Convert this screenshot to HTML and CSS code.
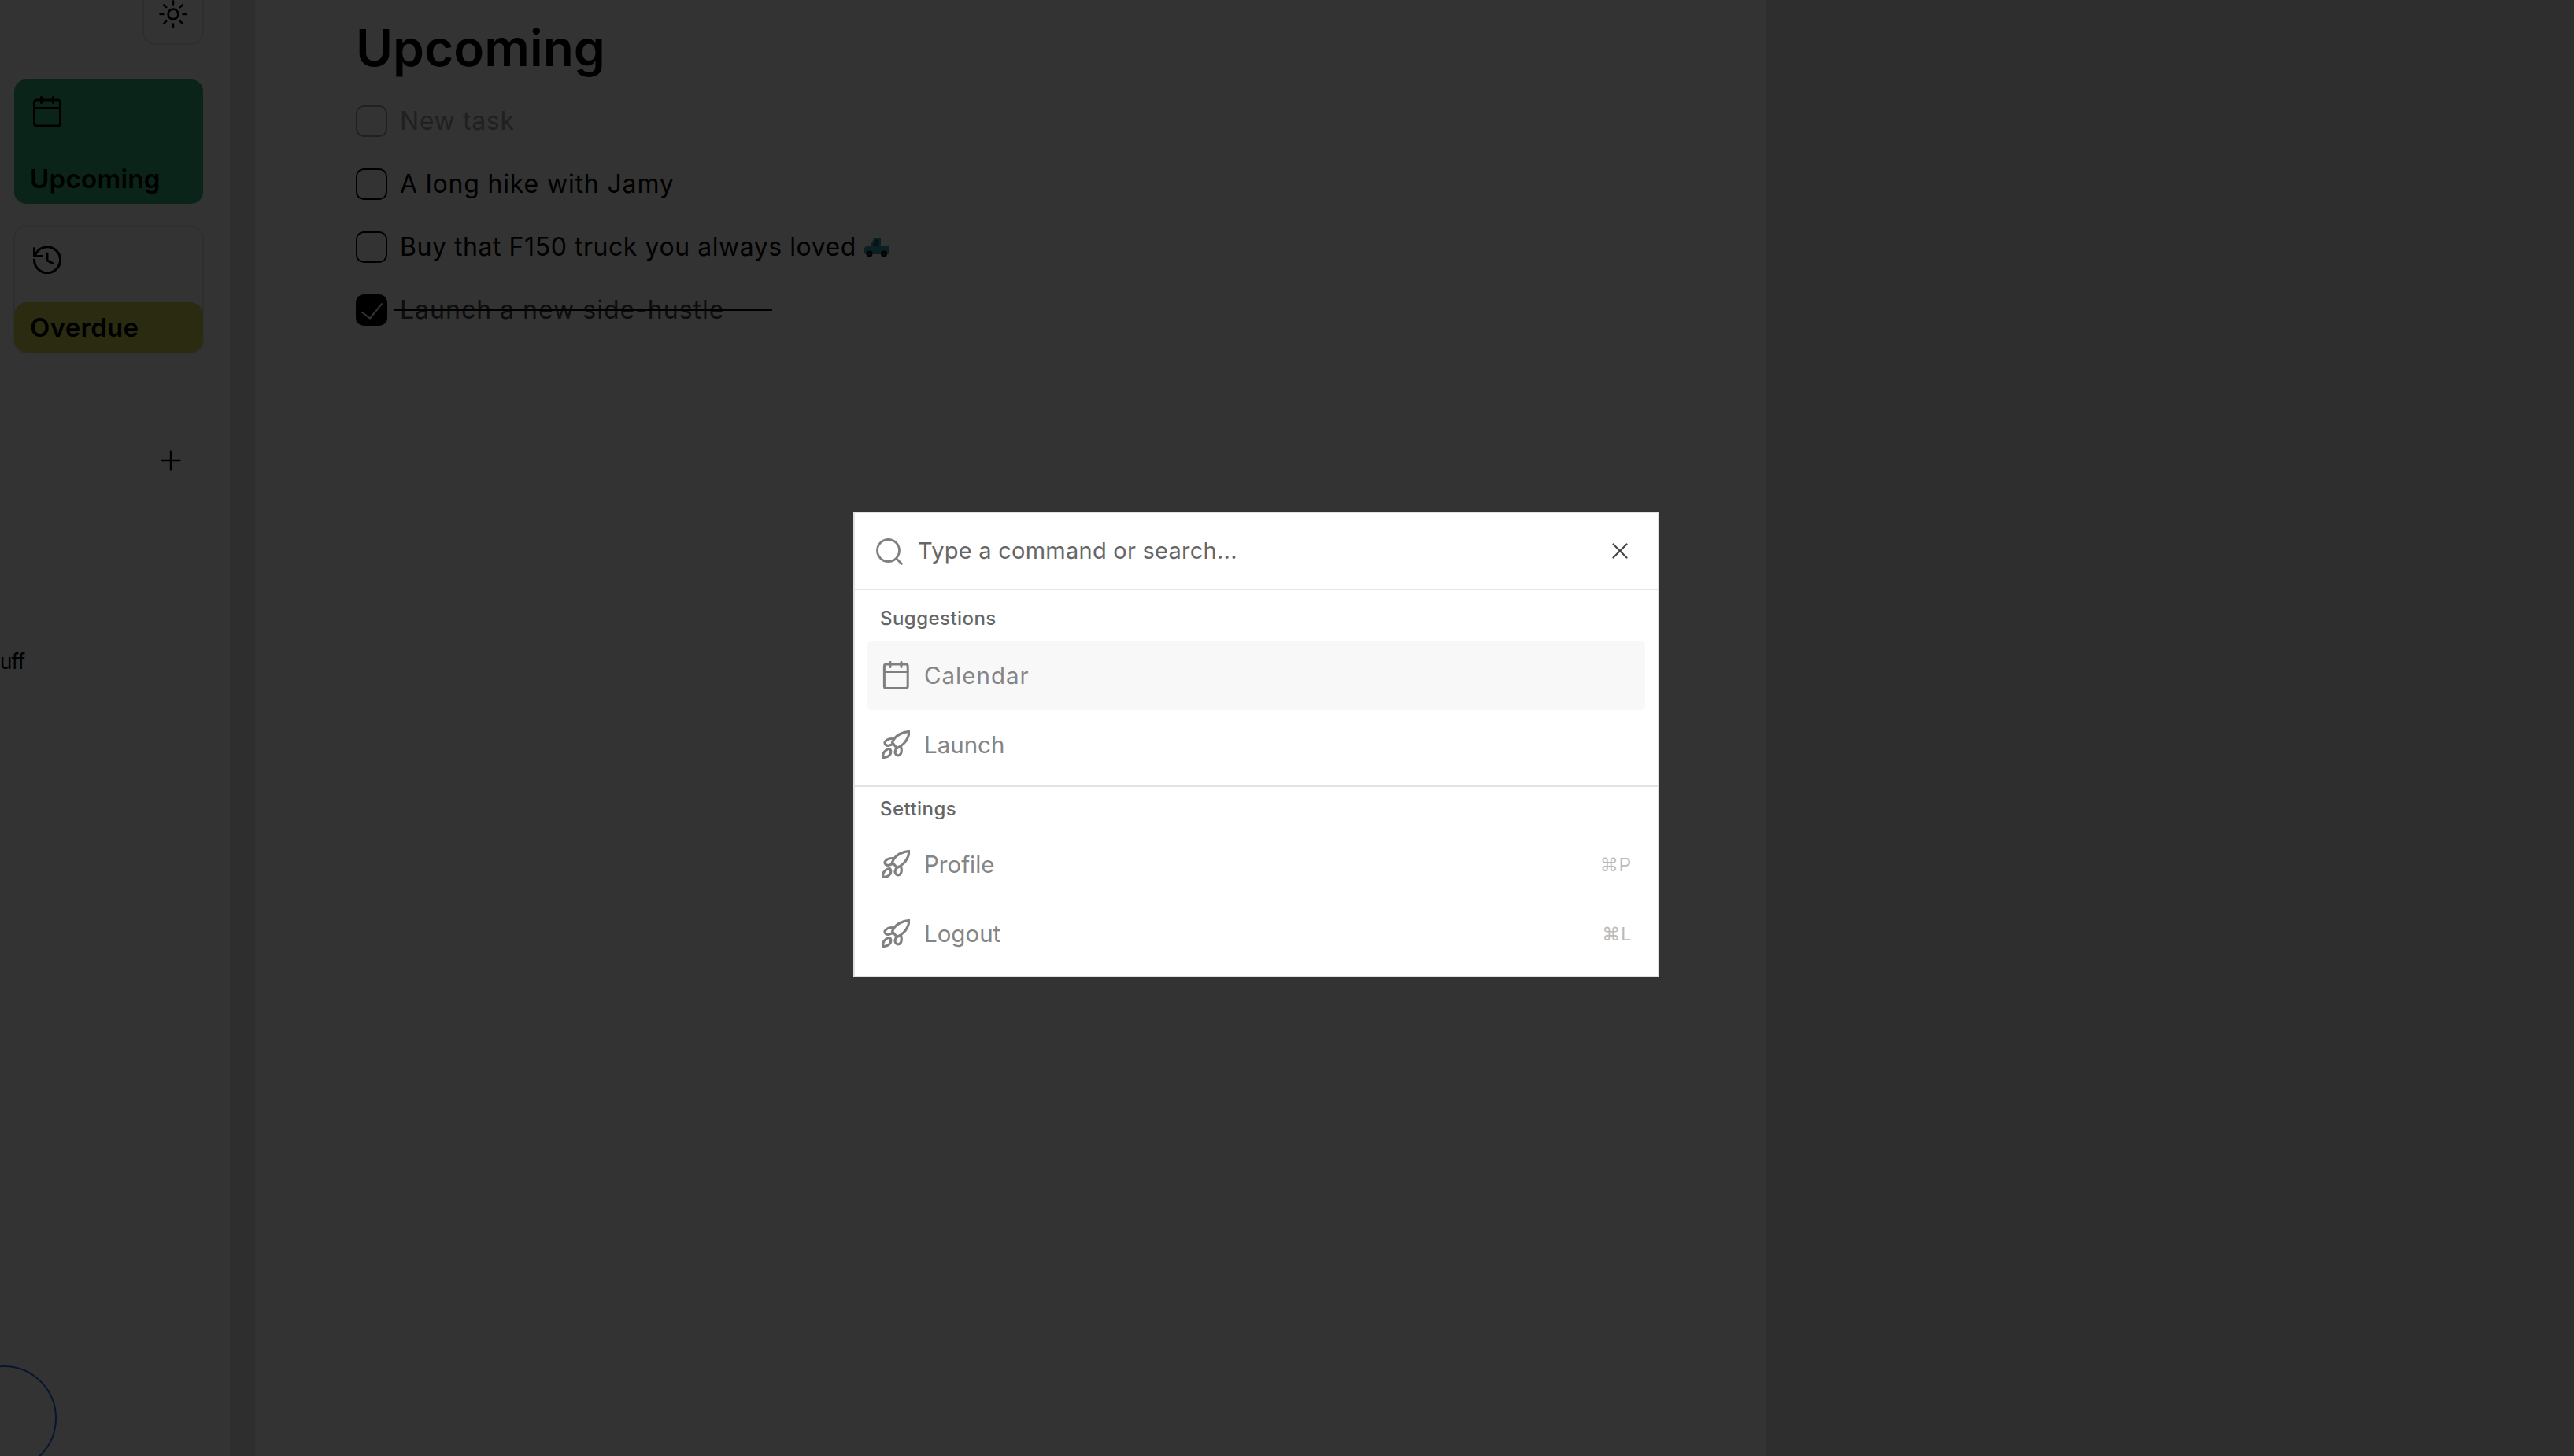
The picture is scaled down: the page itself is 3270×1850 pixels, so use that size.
FILE: index.html
```html
<!DOCTYPE html>
<html lang="en">
<head>
<meta charset="utf-8">
<title>Upcoming</title>
<link rel="stylesheet" href="styles.css">
</head>
<body>
<div class="app">
  <aside class="sidebar">
    <div class="theme-row">
      <button class="theme-btn" aria-label="Theme">
        <svg class="ico-sun" viewBox="0 0 36 36" fill="none" stroke="#000" stroke-width="2.6" stroke-linecap="round"><circle cx="18" cy="18" r="6.4"/><path d="M18 1.5v4M18 30.5v4M1.500 18h4M30.500 18h4M6.300 6.300l2.900 2.900M26.800 26.800l2.900 2.900M6.300 29.700l2.900-2.900M26.800 9.200l2.900-2.900"/></svg>
      </button>
    </div>
    <div class="card card-upcoming">
      <svg class="card-ico" viewBox="0 0 36 40" fill="none" stroke="#000" stroke-width="3" stroke-linecap="round" stroke-linejoin="round"><rect x="1.500" y="5" width="33" height="33" rx="3"/><path d="M1.500 15.500h33M10.500 1.500v7M25.500 1.500v7"/></svg>
      <div class="card-label">Upcoming</div>
    </div>
    <div class="card card-overdue">
      <svg class="card-ico" viewBox="0 0 36 36" fill="none" stroke="#000" stroke-width="3" stroke-linecap="round" stroke-linejoin="round"><path d="M2.200 13.500A16.500 16.500 0 1 1 1.500 18"/><path d="M1.500 3.500v10h10"/><path d="M18 10v9l7 3.500"/></svg>
      <div class="card-label label-overdue">Overdue</div>
    </div>
    <div class="add-row">
      <svg class="ico-plus" viewBox="0 0 24 24" fill="none" stroke="#000" stroke-width="2.200" stroke-linecap="round"><path d="M12 1.500v21M1.500 12h21"/></svg>
    </div>
    <div class="list-name">uff</div>
    <div class="avatar"></div>
  </aside>
  <div class="splitter"></div>
  <main class="main">
    <h1 class="title">Upcoming</h1>
    <ul class="tasks">
      <li class="task task-new"><span class="box"></span><span class="task-text">New task</span></li>
      <li class="task task-hike"><span class="box"></span><span class="task-text">A long hike with Jamy</span></li>
      <li class="task task-truck"><span class="box"></span><span class="task-text">Buy that F150 truck you always loved</span>
        <svg class="truck" viewBox="0 0 33 25"><path d="M1 14c0-1.500 1-2.500 3-3l5-1 3.500-8C13 1 14 0 15.500 0H20c1 0 2 1 2 2v8h9c1 0 2 1 2 2v7c0 1-1 2-2 2H3c-1 0-2-1-2-2z" fill="#3aa0aa"/><path d="M15 2.500H19.500V10h-8z" fill="#2a5a90"/><circle cx="7.500" cy="20.500" r="4" fill="#0a0a0a"/><circle cx="26" cy="20.500" r="4" fill="#0a0a0a"/><circle cx="7.500" cy="20.500" r="1.600" fill="#444"/><circle cx="26" cy="20.500" r="1.600" fill="#444"/></svg>
      </li>
      <li class="task task-done"><span class="box box-checked"><svg viewBox="0 0 40 40" fill="none" stroke="#fff" stroke-width="2"><path d="M7.500 22.500L18 30.500 33.500 11.500"/></svg></span><span class="task-text">Launch a new side-hustle</span><span class="strike"></span></li>
    </ul>
  </main>
  <div class="rightpane"></div>
</div>
<div class="overlay"></div>
<div class="palette">
  <div class="search">
    <svg class="ico-search" viewBox="0 0 34 34" fill="none" stroke="#808080" stroke-width="2.800" stroke-linecap="round"><circle cx="15.500" cy="15.500" r="14"/><path d="M26 26l6.500 6.500"/></svg>
    <span class="placeholder">Type a command or search...</span>
    <svg class="ico-close" viewBox="0 0 20 20" fill="none" stroke="#444" stroke-width="2.200" stroke-linecap="round"><path d="M1.500 1.500l17 17M18.500 1.500l-17 17"/></svg>
  </div>
  <section class="group">
    <div class="heading">Suggestions</div>
    <div class="item item-active">
      <svg class="item-ico" viewBox="0 0 36 36" fill="none" stroke="#808080" stroke-width="3" stroke-linecap="round" stroke-linejoin="round"><rect x="3.400" y="4" width="29.800" height="30.600" rx="2.500"/><path d="M3.400 13.500h29.800M11 1.400v6M25 1.400v6"/></svg>
      <span class="item-text">Calendar</span>
    </div>
    <div class="item">
      <svg class="item-ico" viewBox="0 0 36 36" fill="none" stroke="#808080" stroke-width="3.200" stroke-linejoin="round" stroke-linecap="round"><path d="M35 1.500C27.500 2 19 5.500 15.500 11.500L13.500 15.500 19.500 22.500 23.500 20.500C30 16 34.500 9.500 35 1.500Z"/><path d="M14 10.500C9.500 10.500 5.500 12 4 15.500 3.700 17.500 5.500 19.500 8.500 19.500L13 18"/><path d="M24.500 20.500C26 25 25.500 30 22.500 31.500 19.500 32.500 17 30.500 17 27.500L18 24"/><path d="M10.500 23.500C7.500 23.500 3.200 26 2 30 1.600 32 1.500 34 1.500 34.500 4.200 34.500 8.500 33.500 10.500 31 12.200 29 12.200 25.500 10.500 23.500Z"/></svg>
      <span class="item-text">Launch</span>
    </div>
  </section>
  <section class="group group-last">
    <div class="heading">Settings</div>
    <div class="item">
      <svg class="item-ico" viewBox="0 0 36 36" fill="none" stroke="#808080" stroke-width="3.200" stroke-linejoin="round" stroke-linecap="round"><path d="M35 1.500C27.500 2 19 5.500 15.500 11.500L13.500 15.500 19.500 22.500 23.500 20.500C30 16 34.500 9.500 35 1.500Z"/><path d="M14 10.500C9.500 10.500 5.500 12 4 15.500 3.700 17.500 5.500 19.500 8.500 19.500L13 18"/><path d="M24.500 20.500C26 25 25.500 30 22.500 31.500 19.500 32.500 17 30.500 17 27.500L18 24"/><path d="M10.500 23.500C7.500 23.500 3.200 26 2 30 1.600 32 1.500 34 1.500 34.500 4.200 34.500 8.500 33.500 10.500 31 12.200 29 12.200 25.500 10.500 23.500Z"/></svg>
      <span class="item-text">Profile</span>
      <span class="shortcut">⌘P</span>
    </div>
    <div class="item">
      <svg class="item-ico" viewBox="0 0 36 36" fill="none" stroke="#808080" stroke-width="3.200" stroke-linejoin="round" stroke-linecap="round"><path d="M35 1.500C27.500 2 19 5.500 15.500 11.500L13.500 15.500 19.500 22.500 23.500 20.500C30 16 34.500 9.500 35 1.500Z"/><path d="M14 10.500C9.500 10.500 5.500 12 4 15.500 3.700 17.500 5.500 19.500 8.500 19.500L13 18"/><path d="M24.500 20.500C26 25 25.500 30 22.500 31.500 19.500 32.500 17 30.500 17 27.500L18 24"/><path d="M10.500 23.500C7.500 23.500 3.200 26 2 30 1.600 32 1.500 34 1.500 34.500 4.200 34.500 8.500 33.500 10.500 31 12.200 29 12.200 25.500 10.500 23.500Z"/></svg>
      <span class="item-text">Logout</span>
      <span class="shortcut">⌘L</span>
    </div>
  </section>
</div>
</body>
</html>
```
FILE: styles.css
```css
* { box-sizing: border-box; }
html, body { margin: 0; height: 100%; overflow: hidden; }
body { background: #fff; color: #000; font-family: Inter, "Noto Sans", "DejaVu Sans", sans-serif; }

.app { display: flex; height: 1850px; width: 3270px; overflow: hidden; }

.sidebar { width: 292px; flex: none; height: 100%; overflow: hidden; display: flex; flex-direction: column; }
.sidebar > * { flex: none; }
.theme-row { display: flex; justify-content: flex-end; padding-right: 33px; margin-top: -21px; }
.theme-btn { width: 78px; height: 78px; background: transparent; border: 2px solid #e6e6e6; border-radius: 16px; display: flex; align-items: center; justify-content: center; padding: 0; }
.ico-sun { width: 36px; height: 36px; }

.card { width: 242px; margin-left: 17px; border-radius: 16px; display: flex; flex-direction: column; border: 1px solid transparent; }
.card-upcoming { margin-top: 43px; height: 160px; background: #32b47e; background-clip: padding-box; }
.card-overdue { margin-top: 27px; height: 162px; border: 2px solid #e6e6e6; }
.card-ico { width: 36px; height: 40px; margin: 21px 0 0 24px; flex: none; }
.card-overdue .card-ico { height: 36px; margin: 23px 0 0 23px; }
.card-label { font-weight: 600; font-size: 33px; line-height: 64px; height: 64px; padding-left: 20px; margin-top: auto; letter-spacing: .3px; flex: none; }
.label-overdue { background: #d8d85c; border-radius: 16px; margin: auto -1px -1px; }

.add-row { display: flex; justify-content: flex-end; padding-right: 62px; margin-top: 123px; }
.ico-plus { width: 26px; height: 26px; }
.list-name { font-size: 26px; line-height: 40px; margin-top: 223px; letter-spacing: -.8px; }
.avatar { width: 134px; height: 134px; border-radius: 50%; border: 2px solid #1f6fe0; margin: 874px 0 0 -62px; }

.splitter { width: 32px; flex: none; background: #e6e6e6; }

.main { width: 1920px; flex: none; padding: 22px 0 0 128px; }
.title { margin: -1px 0 0; font-size: 64px; line-height: 80px; font-weight: 600; height: 93px; }
.tasks { list-style: none; margin: 0; padding: 0; }
.task { display: flex; align-items: center; height: 80px; position: relative; }
.task-new { color: #a0a0a0; }
.task-new .box { border-color: #a0a0a0; }
.box { width: 40px; height: 40px; flex: none; border: 2px solid #000; border-radius: 10px; margin-right: 16px; display: block; }
.box-checked { background: #000; }
.box-checked svg { display: block; width: 40px; height: 40px; margin: -2px; }
.task-text { font-size: 32px; line-height: 40px; letter-spacing: .65px; }
.task-hike .task-text { letter-spacing: .85px; }
.task-truck .task-text { letter-spacing: .55px; }
.truck { width: 33px; height: 25px; margin-left: 9px; }
.task-done .task-text { color: #444; letter-spacing: 1px; }
.strike { position: absolute; left: 48px; top: 38px; width: 481px; height: 3px; background: #000; }

.rightpane { flex: 1; background: #e6e6e6; }

.overlay { position: fixed; inset: 0; background: rgba(0,0,0,.8); }

.palette { position: fixed; left: 1084px; top: 650px; width: 1024px; height: 592px; background: #fff; border: 2px solid #e2e2e2; }
.search { height: 98px; border-bottom: 2px solid #e4e4ea; display: flex; align-items: center; padding: 0 38px 0 27px; }
.ico-search { width: 34px; height: 34px; flex: none; margin-top: 2px; }
.placeholder { font-size: 29px; color: #666; margin-left: 19px; flex: 1; margin-top: -2px; letter-spacing: .25px; }
.ico-close { width: 20px; height: 20px; flex: none; }
.group { padding: 0 16px 8px; border-bottom: 2px solid #e2e2e2; height: 250px; }
.group-last { border-bottom: 0; height: auto; padding-bottom: 0; }
.heading { font-size: 24px; font-weight: 500; color: #666; height: 64px; line-height: 72px; padding-left: 16px; letter-spacing: .45px; }
.group-last .heading { height: 54px; line-height: 56px; }
.item { height: 88px; display: flex; align-items: center; padding: 0 17px 0 18px; border-radius: 6px; }
.item-active { background: #f8f8f8; }
.item-ico { width: 36px; height: 36px; flex: none; }
.item-text { font-size: 29.5px; color: #858585; margin-left: 18px; flex: 1; }
.item-active .item-text { letter-spacing: 1px; margin-top: -1px; }
.shortcut { font-size: 23px; color: #bbb; letter-spacing: 1px; font-family: "Liberation Sans", "DejaVu Sans", sans-serif; margin-top: 2px; }
```
